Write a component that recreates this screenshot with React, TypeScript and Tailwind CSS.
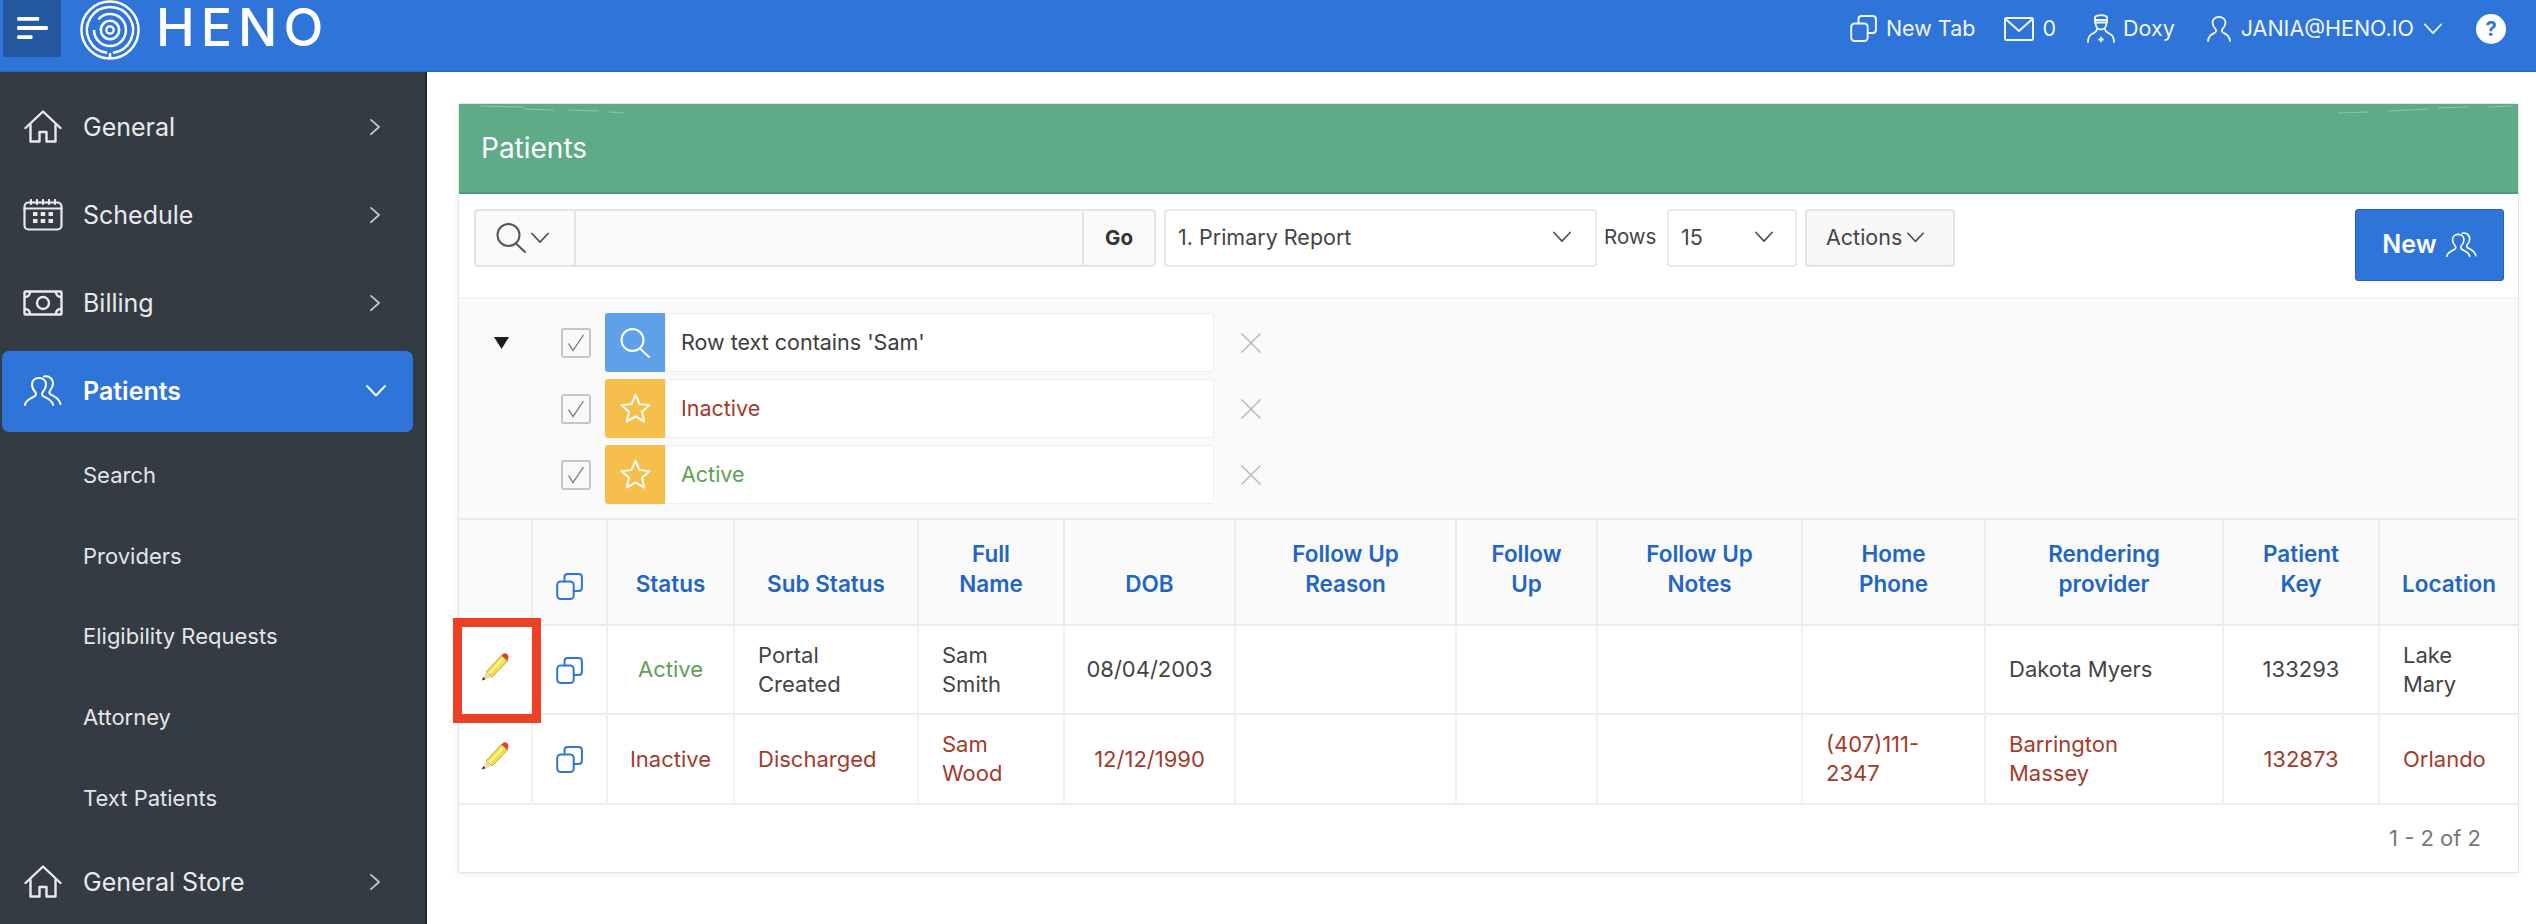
import React from "react";

type P = { className?: string };

const Home = ({ className = "" }: P) => (
  <svg viewBox="0 0 38 34" className={className} fill="none" stroke="currentColor" strokeWidth="2.4" strokeLinejoin="round" strokeLinecap="round">
    <path d="M1.500 18 19 1.500 36.500 18" />
    <path d="M6.500 15v16.500h9V22h7v9.500h9V15" />
  </svg>
);
const Calendar = ({ className = "" }: P) => (
  <svg viewBox="0 0 40 32" className={className} fill="none" stroke="currentColor" strokeWidth="2.2" strokeLinecap="round">
    <rect x="1.500" y="3.500" width="37" height="27" rx="4" />
    <path d="M1.500 9.500h37M8 1v4M14 1v4M20 1v4M26 1v4M32 1v4" />
    <g fill="currentColor" stroke="none">
      <rect x="10" y="13" width="4.500" height="4" /><rect x="17.700" y="13" width="4.500" height="4" /><rect x="25.500" y="13" width="4.500" height="4" />
      <rect x="10" y="20" width="4.500" height="4" /><rect x="17.700" y="20" width="4.500" height="4" /><rect x="25.500" y="20" width="4.500" height="4" />
    </g>
  </svg>
);
const Money = ({ className = "" }: P) => (
  <svg viewBox="0 0 40 26" className={className} fill="none" stroke="currentColor" strokeWidth="2.400">
    <rect x="1.500" y="1.500" width="37" height="23" rx="1" />
    <circle cx="20" cy="13" r="6" />
    <path d="M2 7c3 0 5-2 5-5M33 2c0 3 2 5 5 5M2 19c3 0 5 2 5 5M33 24c0-3 2-5 5-5" />
  </svg>
);
const Users = ({ className = "" }: P) => (
  <svg viewBox="0 0 38 32" className={className} fill="none" stroke="currentColor" strokeWidth="2" strokeLinecap="round" strokeLinejoin="round">
    <path d="M15 3c-4.500 0-7 3-7 6.500 0 3.500 2.200 6.500 3.500 8 .8 1 .5 3-1 3.800C7 23.300 1.500 25 1 30" />
    <path d="M15 3c4.500 0 7 3 7 6.500 0 3.500-2.200 6.500-3.500 8-.8 1-.5 3 1 3.800 3.500 2 9 3.700 9.500 8.700" />
    <path d="M20 1.500c4-1 9 1.500 9 7 0 3.500-2 6-3.200 7.500-.8 1-.5 2.800 1 3.600 3 1.700 8.700 3.700 9.700 9.400" />
  </svg>
);
const User = ({ className = "" }: P) => (
  <svg viewBox="0 0 24 26" className={className} fill="none" stroke="currentColor" strokeWidth="1.800" strokeLinecap="round" strokeLinejoin="round">
    <path d="M12 1c-4 0-6.500 2.500-6.500 5.500 0 3 2 5.500 3.200 6.800.8 1 .5 2.700-1 3.500C4.500 18.500 1.500 20 1 25" />
    <path d="M12 1c4 0 6.500 2.500 6.500 5.500 0 3-2 5.500-3.200 6.800-.8 1-.5 2.700 1 3.500 3.200 1.700 6.200 3.200 6.700 8.200" />
  </svg>
);
const Doctor = ({ className = "" }: P) => (
  <svg viewBox="0 0 28 29" className={className} fill="none" stroke="currentColor" strokeWidth="1.800" strokeLinecap="round" strokeLinejoin="round">
    <path d="M8 3c2-2.500 10-2.500 12 0v5.500H8z" />
    <path d="M8 6h12" />
    <path d="M8.500 8.500c0 4 2 7 5.500 7s5.500-3 5.500-7" />
    <path d="M10 15c0 2.500-2 3.500-5 5-2.500 1.200-4 3.500-4 8M18 15c0 2.500 2 3.500 5 5 2.500 1.200 4 3.500 4 8" />
    <path d="M14 23.500v4M12 25.500h4" />
  </svg>
);
const Mail = ({ className = "" }: P) => (
  <svg viewBox="0 0 30 24" className={className} fill="none" stroke="currentColor" strokeWidth="2">
    <rect x="1" y="1" width="28" height="22" rx="1.500" />
    <path d="M1.500 2 15 14 28.500 2" />
  </svg>
);
const Clone = ({ className = "" }: P) => (
  <svg viewBox="0 0 27 27" className={className} fill="none" stroke="currentColor" strokeWidth="2" strokeLinejoin="round" strokeLinecap="round">
    <rect x="1.200" y="8.500" width="16.500" height="17.500" rx="3.500" />
    <path d="M8.500 8.500V4.200C8.500 2.400 9.900 1 11.700 1h11c1.800 0 3.200 1.400 3.200 3.200v10.600c0 1.800-1.400 3.200-3.200 3.200h-5" />
  </svg>
);
const Search = ({ className = "" }: P) => (
  <svg viewBox="0 0 30 30" className={className} fill="none" stroke="currentColor" strokeWidth="2" strokeLinecap="round">
    <circle cx="12.500" cy="12" r="11" />
    <path d="M20 20.500 29 29" />
  </svg>
);
const Star = ({ className = "" }: P) => (
  <svg viewBox="0 0 32 32" className={className} fill="none" stroke="currentColor" strokeWidth="2" strokeLinejoin="round">
    <path d="M16 2l4.200 9.500 10.300 1-7.800 6.800 2.300 10.200L16 24.200 7 29.500l2.300-10.200L1.500 12.500l10.300-1z" />
  </svg>
);
const Chevron = ({ className = "", dir = "right" }: P & { dir?: "right" | "down" }) => (
  <svg viewBox="0 0 20 20" className={className} fill="none" stroke="currentColor" strokeWidth="2" strokeLinecap="round" strokeLinejoin="round">
    {dir === "right" ? <path d="M5.500 2 14.500 10l-9 8" /> : <path d="M1 5 10 14.500 19 5" />}
  </svg>
);
const Pencil = ({ className = "" }: P) => (
  <svg viewBox="0 0 28 28" className={className}>
    <path d="M5.500 18.500 20.500 2.500l6 5.500L11 24z" fill="#f4e04c" stroke="#b9a52c" strokeWidth="1" />
    <path d="M8 20.500 23 4.800" stroke="#fdf59a" strokeWidth="2" />
    <path d="M20.500 2.500 22.500 .5c1-.7 2.800-.4 4 .9 1.100 1.200 1.400 2.800.6 3.900L26.500 8z" fill="#e2412f" />
    <path d="M5.500 18.500 .8 27.500 11 24z" fill="#eadca0" />
    <path d="M2.500 24 .8 27.500 4.500 26.300z" fill="#2c2c2c" />
  </svg>
);
const Logo = ({ className = "" }: P) => (
  <svg viewBox="0 0 62 62" className={className} fill="none" stroke="#fff" strokeWidth="2.600" strokeLinecap="butt">
    <circle cx="31" cy="31" r="29.500" />
    <path d="M28 54.600A23.800 23.800 0 1 1 34 54.600" />
    <path d="M31 54.800V60" />
    <path d="M14.500 31a16.500 16.500 0 1 0 16.500-16.500c-5 0-9 2-12 5.500" />
    <circle cx="31" cy="31" r="9.500" />
    <circle cx="31" cy="31" r="3.800" strokeWidth="2.400" />
  </svg>
);

const sideItems = [
  { label: "General", icon: <Home className="w-[38px] h-[34px]" /> },
  { label: "Schedule", icon: <Calendar className="w-[40px] h-[32px]" /> },
  { label: "Billing", icon: <Money className="w-[40px] h-[26px]" /> },
];
const subItems = ["Search", "Providers", "Eligibility Requests", "Attorney", "Text Patients"];

function SideRow({ label, icon }: { label: string; icon: React.ReactNode }) {
  return (
    <div className="h-[88px] flex items-center text-[#e8eaec]">
      <div className="w-[83px] flex justify-center pl-[3px]">{icon}</div>
      <span className="flex-1 text-[25px] leading-none pt-[1px]">{label}</span>
      <Chevron className="w-[18px] h-[18px] mr-[41px] text-[#c3c6c9]" />
    </div>
  );
}

function Sidebar() {
  return (
    <aside className="w-[427px] shrink-0 bg-[#343b43] border-r-2 border-r-[#23272c] pt-[11px] overflow-hidden">
      {sideItems.map((i) => (
        <SideRow key={i.label} {...i} />
      ))}
      <div className="h-[88px] flex items-center">
        <div className="ml-[2px] w-[411px] h-[81px] rounded-[7px] bg-[#2f74d8] flex items-center text-white">
          <div className="w-[81px] flex justify-center pl-[1px]">
            <Users className="w-[38px] h-[32px]" />
          </div>
          <span className="flex-1 text-[25px] leading-none font-semibold">Patients</span>
          <Chevron dir="down" className="w-[20px] h-[20px] mr-[27px]" />
        </div>
      </div>
      {subItems.map((s) => (
        <div key={s} className="h-[80.7px] flex items-center pl-[83px] text-[22px] text-[#e3e5e7]">
          {s}
        </div>
      ))}
      <SideRow label="General Store" icon={<Home className="w-[38px] h-[34px]" />} />
    </aside>
  );
}

function Header() {
  return (
    <header className="h-[72px] shrink-0 bg-[#2f74d8] border-b border-b-[#2a6bcb] flex items-start text-white">
      <button className="ml-[3px] w-[58px] h-[57px] rounded-b-[3px] bg-[#23579f] flex items-center justify-center">
        <svg viewBox="0 0 32 24" className="w-[31px] h-[23px]" fill="#fff">
          <rect x="0" y="0" width="23" height="4" rx="1" />
          <rect x="0" y="9.500" width="32" height="4" rx="1" />
          <rect x="0" y="19" width="16" height="4" rx="1" />
        </svg>
      </button>
      <Logo className="ml-[19px] w-[60px] h-[60px]" />
      <span className="ml-[16px] text-[52px] leading-[56px] font-medium tracking-[6px]">HENO</span>
      <div className="ml-auto h-[57px] flex items-center text-[21.500px] text-[#f2f6fc]">
        <Clone className="w-[27px] h-[27px]" />
        <span className="ml-[9px]">New Tab</span>
        <Mail className="ml-[29px] w-[30px] h-[24px]" />
        <span className="ml-[8px]">0</span>
        <Doctor className="ml-[31px] w-[28px] h-[29px]" />
        <span className="ml-[8px]">Doxy</span>
        <User className="ml-[32px] w-[24px] h-[26px]" />
        <span className="ml-[10px]">JANIA@HENO.IO</span>
        <Chevron dir="down" className="ml-[10px] w-[18px] h-[18px]" />
        <div className="ml-[34px] mr-[30px] w-[30px] h-[30px] rounded-full bg-white flex items-center justify-center text-[#2f74d8] text-[20px] font-bold leading-none">
          ?
        </div>
      </div>
    </header>
  );
}

function Toolbar() {
  return (
    <div className="flex items-start h-[103px] pt-[15px] pl-[15px] pr-[14px] text-[21.500px] text-[#444]">
      <div className="w-[682px] h-[58px] flex border-2 border-[#e4e4e4] rounded-[4px] bg-[#fafafa]">
        <div className="w-[100px] flex items-center pl-[20px] border-r-2 border-r-[#e4e4e4] text-[#555]">
          <Search className="w-[30px] h-[30px]" />
          <Chevron dir="down" className="ml-[5px] w-[18px] h-[18px]" />
        </div>
        <div className="flex-1" />
        <div className="w-[72px] flex items-center justify-center border-l-2 border-l-[#e4e4e4] font-bold text-[20.500px] text-[#333]">
          Go
        </div>
      </div>
      <div className="ml-[8px] w-[433px] h-[58px] flex items-center justify-between border-2 border-[#e8e8e8] rounded-[4px] bg-white pl-[12px] pr-[24px] pb-[2px]">
        <span>1. Primary Report</span>
        <Chevron dir="down" className="w-[18px] h-[18px] text-[#555]" />
      </div>
      <span className="ml-[7px] w-[63px] h-[58px] flex items-center text-[20.500px] pb-[2px]">Rows</span>
      <div className="w-[130px] h-[58px] flex items-center justify-between border-2 border-[#e8e8e8] rounded-[4px] bg-white pl-[12px] pr-[22px] pb-[2px]">
        <span>15</span>
        <Chevron dir="down" className="w-[18px] h-[18px] text-[#555]" />
      </div>
      <div className="ml-[8px] w-[150px] h-[58px] flex items-center border-2 border-[#e4e4e4] rounded-[4px] bg-[#f8f8f8] pl-[19px] pb-[2px]">
        <span>Actions</span>
        <Chevron dir="down" className="ml-[5px] w-[17px] h-[17px] text-[#555]" />
      </div>
      <button className="ml-auto w-[149px] h-[72px] rounded-[3px] bg-[#2f74d8] border border-[#2563bb] flex items-center justify-center text-white text-[25px] font-semibold">
        New
        <Users className="ml-[9px] w-[31px] h-[30px]" />
      </button>
    </div>
  );
}

function FilterRow({ kind, label, color, first }: { kind: "search" | "star"; label: string; color: string; first?: boolean }) {
  return (
    <div className="flex items-center h-[59px]">
      <div className="w-[102px] pl-[35px]">
        {first && (
          <svg viewBox="0 0 15 12" className="w-[15px] h-[12px]" fill="#1c1c1c">
            <path d="M0 0h15L7.500 12z" />
          </svg>
        )}
      </div>
      <div className="w-[30px] h-[30px] rounded-[3px] border-2 border-[#c6c6c6] bg-[#f9f9f9] flex items-center justify-center text-[#777]">
        <svg viewBox="0 0 20 20" className="w-[20px] h-[20px]" fill="none" stroke="currentColor" strokeWidth="1.300">
          <path d="M2.500 10.500 7 17.500 17.500 2" />
        </svg>
      </div>
      <div className={`ml-[14px] w-[60px] h-[59px] rounded-l-[3px] flex items-center justify-center text-white ${kind === "search" ? "bg-[#5ea1e8]" : "bg-[#f6bf4c]"}`}>
        {kind === "search" ? <Search className="w-[30px] h-[30px]" /> : <Star className="w-[31px] h-[31px]" />}
      </div>
      <div className={`w-[549px] h-[59px] flex items-center pl-[15px] bg-white border border-[#eeeeee] rounded-r-[3px] text-[21.500px] ${color}`}>
        {label}
      </div>
      <svg viewBox="0 0 22 22" className="ml-[26px] w-[22px] h-[22px] text-[#b8b8b8]" fill="none" stroke="currentColor" strokeWidth="1.500">
        <path d="M1.500 1.500l19 19M20.500 1.500l-19 19" />
      </svg>
    </div>
  );
}

const red = "text-[#a23b2c]";
const widths = [73, 75, 127, 184, 146, 171, 221, 141, 205, 183, 238, 156, 139];
const headers: string[][] = [
  [],
  [],
  ["Status"],
  ["Sub Status"],
  ["Full", "Name"],
  ["DOB"],
  ["Follow Up", "Reason"],
  ["Follow", "Up"],
  ["Follow Up", "Notes"],
  ["Home", "Phone"],
  ["Rendering", "provider"],
  ["Patient", "Key"],
  ["Location"],
];
const td = "border-r-2 border-r-[#f1f1f1] last:border-r-0 align-middle leading-[29px]";

function Lines({ t }: { t: string[] }) {
  return (
    <>
      {t.map((l) => (
        <div key={l}>{l}</div>
      ))}
    </>
  );
}

function DataRow({ cells, color, highlight, firstColor, tall }: { cells: (string[] | null)[]; color: string; highlight?: boolean; firstColor?: string; tall?: boolean }) {
  const center = [2, 5, 11];
  return (
    <tr className={`${tall ? "h-[90px]" : "h-[89px]"} border-b-2 border-b-[#ededed] ${color}`}>
      <td className={`${td} relative text-center`}>
        <Pencil className="w-[28px] h-[28px] inline-block -mt-[9px]" />
        {highlight && <div className="absolute -left-[6px] -top-[8px] w-[88px] h-[105px] border-[9px] border-[#ee4024] z-10" />}
      </td>
      <td className={`${td} text-center`}>
        <Clone className="w-[27px] h-[27px] inline-block text-[#2f74d8] -mt-[2px]" />
      </td>
      {cells.map((c, i) => (
        <td key={i} className={`${td} ${center.includes(i + 2) ? "text-center" : "text-left pl-[23px]"} ${i === 0 && firstColor ? firstColor : ""}`}>
          {c && <Lines t={c} />}
        </td>
      ))}
    </tr>
  );
}

function PatientTable() {
  return (
    <table className="w-[2059px] table-fixed border-collapse text-[22px]">
      <colgroup>
        {widths.map((w, i) => (
          <col key={i} style={{ width: w }} />
        ))}
      </colgroup>
      <thead>
        <tr className="h-[106px] bg-[#fafafa] border-y-2 border-y-[#ececec]">
          {headers.map((h, i) => (
            <th key={i} className="border-r-2 border-r-[#ececec] last:border-r-0 align-bottom pb-[25px] px-0 text-center font-semibold text-[22.500px] leading-[30px] text-[#2266c4]">
              {i === 1 ? <Clone className="w-[27px] h-[27px] inline-block text-[#2f74d8] -mb-[1px]" /> : <Lines t={h} />}
            </th>
          ))}
        </tr>
      </thead>
      <tbody>
        <DataRow
          highlight
          color="text-[#444]"
          firstColor="text-[#5da155]"
          cells={[
            ["Active"],
            ["Portal", "Created"],
            ["Sam", "Smith"],
            ["08/04/2003"],
            null,
            null,
            null,
            null,
            ["Dakota Myers"],
            ["133293"],
            ["Lake", "Mary"],
          ]}
        />
        <DataRow
          tall
          color={red}
          cells={[
            ["Inactive"],
            ["Discharged"],
            ["Sam", "Wood"],
            ["12/12/1990"],
            null,
            null,
            null,
            ["(407)111-", "2347"],
            ["Barrington", "Massey"],
            ["132873"],
            ["Orlando"],
          ]}
        />
      </tbody>
    </table>
  );
}

export default function App() {
  return (
    <div className="w-[2536px] h-[924px] flex flex-col overflow-hidden bg-white font-[family-name:Inter,'Liberation_Sans',sans-serif]">
      <Header />
      <div className="flex-1 flex min-h-0">
        <Sidebar />
        <main className="flex-1 bg-white pl-[31px] pr-[17px] pt-[31px] min-w-0">
          <section className="h-[770px] border border-[#e6e6e6] rounded-[2px] shadow-[0_2px_6px_rgba(0,0,0,0.07)] bg-white">
            <div className="relative h-[90px] bg-[#5fab88] border-b-2 border-b-[#509a78] flex items-center pl-[22px] text-white text-[28px] overflow-hidden">
              Patients
              <svg viewBox="0 0 2060 14" className="absolute left-0 top-0 w-full h-[14px]" fill="none" stroke="#fff" strokeOpacity="0.3" strokeWidth="1.200">
                <path d="M20 2l45 1M65 5l30 1M110 6l30 1M150 8l15 1M1880 9l30-1M1930 7l40-2M1980 4l30-1M2030 3l25-1" />
              </svg>
            </div>
            <Toolbar />
            <div className="h-[221px] bg-[#fafafa] border-t-2 border-t-[#f3f3f3] pt-[14px] flex flex-col gap-[7px]">
              <FilterRow first kind="search" label="Row text contains 'Sam'" color="text-[#3d3d3d]" />
              <FilterRow kind="star" label="Inactive" color={red} />
              <FilterRow kind="star" label="Active" color="text-[#5da155]" />
            </div>
            <PatientTable />
            <div className="h-[67px] flex items-center justify-end pr-[37px] text-[22px] text-[#777]">1 - 2 of 2</div>
          </section>
        </main>
      </div>
    </div>
  );
}
